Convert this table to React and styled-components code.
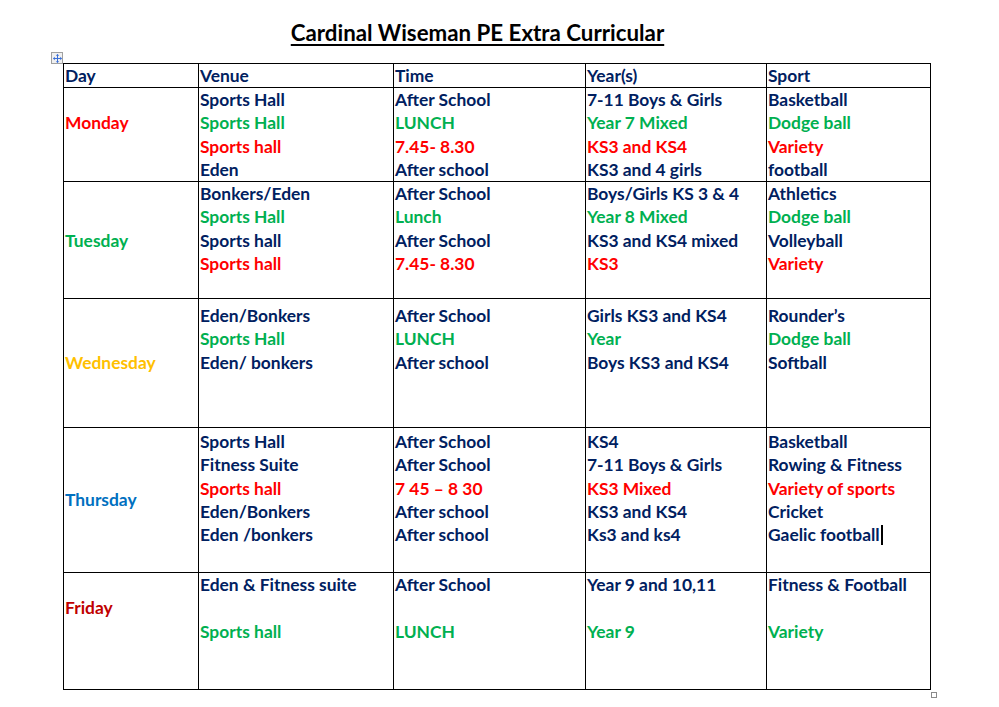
import React from 'react';
import styled, { createGlobalStyle } from 'styled-components';

const N = '#002060';
const G = '#00b050';
const R = '#ff0000';
const LINE = 23.33;

const GlobalStyle = createGlobalStyle`
  body {
    margin: 0;
    background: #fff;
    font-family: Lato, "Liberation Sans", sans-serif;
  }
`;

const Page = styled.div`
  position: relative;
  width: 999px;
  height: 707px;
  padding-top: 18px;
  box-sizing: border-box;
`;

const TitleRow = styled.div`
  width: 955px;
  display: flex;
  justify-content: center;
  height: 45px;
`;

const Title = styled.h1`
  margin: 0;
  font-size: 22.3px;
  font-weight: 700;
  line-height: 29px;
  color: #000;
  text-decoration: underline;
  text-underline-offset: 3px;
  text-decoration-thickness: 2px;
`;

const Grid = styled.div`
  position: relative;
  margin-left: 63px;
  display: grid;
  grid-template-columns: 135px 195px 192px 181px 164px;
  grid-template-rows: 24px 94px 117px 129px 145px 117px;
  width: max-content;
  border-left: 1px solid #000;
  border-top: 1px solid #000;
`;

const Cell = styled.div`
  border-right: 1px solid #000;
  border-bottom: 1px solid #000;
  padding: ${(p) => p.$pad || 0}px 0 0 1px;
  font-size: 17.4px;
  font-weight: 700;
  line-height: ${LINE}px;
  color: ${N};
  white-space: nowrap;
  overflow: hidden;
`;

const DayCell = styled(Cell)`
  display: flex;
  flex-direction: column;
  justify-content: ${(p) => (p.$middle ? 'center' : 'flex-start')};
  padding-top: ${(p) => (p.$middle ? 0 : (p.$pad || 0) + p.$offset * LINE)}px;
  color: ${(p) => p.$color};
`;

const Line = styled.div`
  height: ${LINE}px;
  color: ${(p) => p.$color || N};
`;

const Caret = styled.span`
  display: inline-block;
  width: 2px;
  height: 20px;
  margin-left: 1px;
  background: #000;
  vertical-align: -4px;
`;

const MoveHandle = styled.div`
  position: absolute;
  left: -13px;
  top: -12px;
  width: 10px;
  height: 10px;
  border: 1px solid #a0a0a0;
  background: #f0f0f0;
  display: flex;
  align-items: center;
  justify-content: center;
`;

const ResizeHandle = styled.div`
  position: absolute;
  right: -6px;
  bottom: -8px;
  width: 4px;
  height: 4px;
  border: 1px solid #8a8a8a;
  background: #fff;
`;

const rows = [
  {
    day: 'Monday', color: '#ff0000', offset: 1, pad: 0,
    cols: [
      [['Sports Hall'], ['Sports Hall', G], ['Sports hall', R], ['Eden']],
      [['After School'], ['LUNCH', G], ['7.45- 8.30', R], ['After school']],
      [['7-11 Boys & Girls'], ['Year 7 Mixed', G], ['KS3 and KS4', R], ['KS3 and 4 girls']],
      [['Basketball'], ['Dodge ball', G], ['Variety', R], ['football']],
    ],
  },
  {
    day: 'Tuesday', color: '#00b050', offset: 2, pad: 0,
    cols: [
      [['Bonkers/Eden'], ['Sports Hall', G], ['Sports hall'], ['Sports hall', R]],
      [['After School'], ['Lunch', G], ['After School'], ['7.45- 8.30', R]],
      [['Boys/Girls KS 3 & 4'], ['Year 8 Mixed', G], ['KS3 and KS4 mixed'], ['KS3', R]],
      [['Athletics'], ['Dodge ball', G], ['Volleyball'], ['Variety', R]],
    ],
  },
  {
    day: 'Wednesday', color: '#ffc000', offset: 2, pad: 5,
    cols: [
      [['Eden/Bonkers'], ['Sports Hall', G], ['Eden/ bonkers']],
      [['After School'], ['LUNCH', G], ['After school']],
      [['Girls KS3 and KS4'], ['Year', G], ['Boys KS3 and KS4']],
      [['Rounder\u2019s'], ['Dodge ball', G], ['Softball']],
    ],
  },
  {
    day: 'Thursday', color: '#0070c0', middle: true, pad: 2,
    cols: [
      [['Sports Hall'], ['Fitness Suite'], ['Sports hall', R], ['Eden/Bonkers'], ['Eden /bonkers']],
      [['After School'], ['After School'], ['7 45 \u2013 8 30', R], ['After school'], ['After school']],
      [['KS4'], ['7-11 Boys & Girls'], ['KS3 Mixed', R], ['KS3 and KS4'], ['Ks3 and ks4']],
      [['Basketball'], ['Rowing & Fitness'], ['Variety of sports', R], ['Cricket'], ['Gaelic football', N, true]],
    ],
  },
  {
    day: 'Friday', color: '#c00000', offset: 1, pad: 0,
    cols: [
      [['Eden & Fitness suite'], [''], ['Sports hall', G]],
      [['After School'], [''], ['LUNCH', G]],
      [['Year 9 and 10,11'], [''], ['Year 9', G]],
      [['Fitness & Football'], [''], ['Variety', G]],
    ],
  },
];

const headers = ['Day', 'Venue', 'Time', 'Year(s)', 'Sport'];

const MoveIcon = () => (
  <svg width="9" height="9" viewBox="0 0 9 9">
    <g stroke="#3a6fd8" strokeWidth="1" fill="none">
      <path d="M4.5 0.5v8M0.5 4.5h8" />
    </g>
    <g fill="#3a6fd8">
      <path d="M4.5 0 L2.8 1.8 H6.2Z M4.5 9 L2.8 7.2 H6.2Z M0 4.5 L1.8 2.8 V6.2Z M9 4.5 L7.2 2.8 V6.2Z" />
    </g>
  </svg>
);

const App = () => (
  <Page>
    <GlobalStyle />
    <TitleRow>
      <Title>Cardinal Wiseman PE Extra Curricular</Title>
    </TitleRow>
    <Grid>
      <MoveHandle><MoveIcon /></MoveHandle>
      {headers.map((h) => (
        <Cell key={h}>{h}</Cell>
      ))}
      {rows.map((row) => (
        <React.Fragment key={row.day}>
          <DayCell $color={row.color} $offset={row.offset || 0} $pad={row.pad} $middle={row.middle}>
            <div>{row.day}</div>
          </DayCell>
          {row.cols.map((lines, i) => (
            <Cell key={i} $pad={row.pad}>
              {lines.map(([text, color, caret], j) => (
                <Line key={j} $color={color}>
                  {text}
                  {caret && <Caret />}
                </Line>
              ))}
            </Cell>
          ))}
        </React.Fragment>
      ))}
      <ResizeHandle />
    </Grid>
  </Page>
);

export default App;
